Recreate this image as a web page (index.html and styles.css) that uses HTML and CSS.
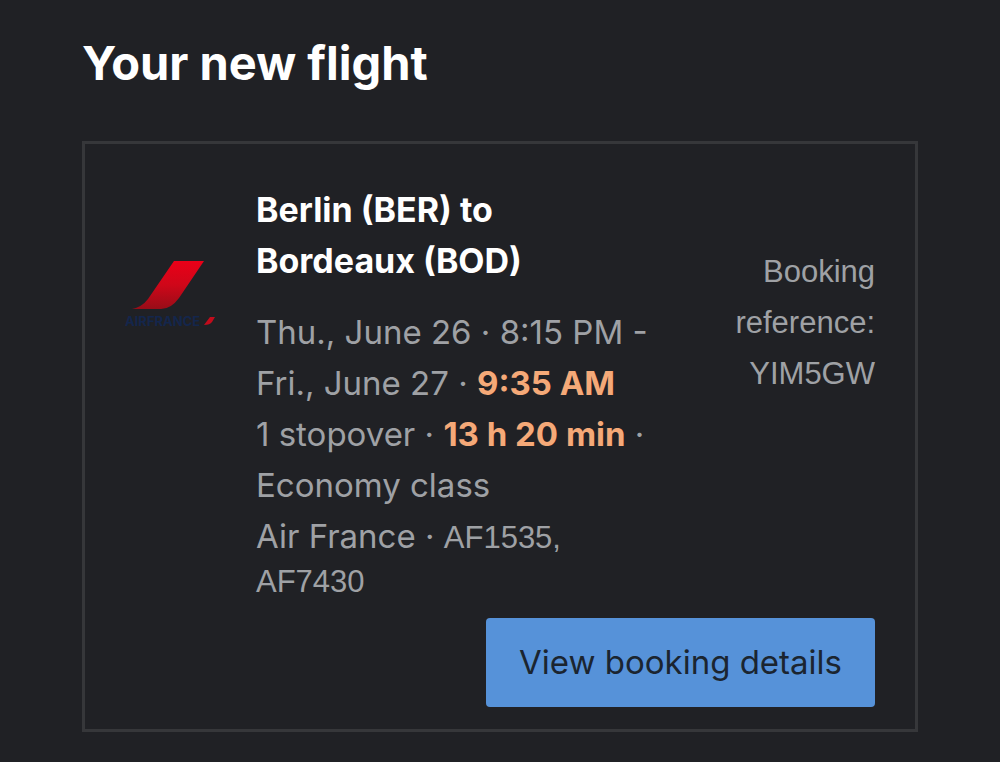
FILE: index.html
```html
<!DOCTYPE html>
<html lang="en">
<head>
    <meta charset="UTF-8">
    <meta name="viewport" content="width=device-width, initial-scale=1.0">
    <title>Your new flight</title>
    <link rel="stylesheet" href="styles.css">
</head>
<body>
    <main class="page">
        <h1 class="page-title">Your new flight</h1>

        <section class="flight-card">
            <div class="flight-row">
                <!-- Airline logo -->
                <svg class="airline-logo" viewBox="0 0 92 68" role="img" aria-label="Air France">
                    <defs>
                        <linearGradient id="tail" x1="0" y1="0" x2="0" y2="1">
                            <stop offset="0" stop-color="#ea0018"/>
                            <stop offset="0.5" stop-color="#cf0719"/>
                            <stop offset="1" stop-color="#980d18"/>
                        </linearGradient>
                    </defs>
                    <path fill="url(#tail)" d="M49 1H79L54 38Q46 49 36 49H7Q17 47 23 39Z"/>
                    <text class="logo-name" x="0" y="66">AIRFRANCE</text>
                    <path fill="#c20c1c" d="M85 57H90L87 62Q85 65 79 65Z"/>
                </svg>

                <div class="flight-info">
                    <h2 class="route">Berlin (BER) to<br>Bordeaux (BOD)</h2>
                    <p class="details">
                        Thu., June 26 · 8:15 PM -<br>
                        Fri., June 27 · <strong>9:35 AM</strong><br>
                        1 stopover · <strong>13 h 20 min</strong> ·<br>
                        Economy class<br>
                        Air France · <span class="code">AF1535,</span>
                    </p>
                    <p class="code last-code">AF7430</p>
                </div>

                <p class="reference">Booking reference: YIM5GW</p>
            </div>

            <div class="actions">
                <button type="button" class="details-button">View booking details</button>
            </div>
        </section>
    </main>
</body>
</html>
```

FILE: styles.css
```css
* {
    margin: 0;
    padding: 0;
    box-sizing: border-box;
}

body {
    background: #202125;
    color: #9fa1a5;
    font-family: Inter, "Liberation Sans", sans-serif;
    font-size: 33px;
    line-height: 51px;
}

.page {
    padding: 31px 82px 30px;
}

.page-title {
    color: #fff;
    font-size: 47px;
    font-weight: 700;
    line-height: 64px;
    margin-bottom: 46px;
}

.flight-card {
    border: 3px solid #36373a;
    padding: 40px 40px 22px;
}

.flight-row {
    display: flex;
    justify-content: space-between;
}

.airline-logo {
    flex: none;
    width: 92px;
    height: 68px;
    margin: 76px 39px 0 0;
}

.logo-name {
    fill: #14264c;
    font-family: Inter, sans-serif;
    font-size: 13px;
    font-weight: 700;
}

.flight-info {
    flex: 1;
}

.route {
    color: #fff;
    font-size: 34px;
    font-weight: 700;
    margin-bottom: 21px;
}

.details {
    white-space: nowrap;
}

.details strong {
    color: #f5a978;
    font-weight: 700;
}

.code,
.reference {
    font-family: "Liberation Sans", sans-serif;
    font-size: 31px;
}

.last-code {
    line-height: 38px;
}

.reference {
    width: 142px;
    margin-top: 62px;
    text-align: right;
}

.actions {
    display: flex;
    justify-content: flex-end;
    margin-top: 17px;
}

.details-button {
    padding: 19px 33px;
    border: none;
    border-radius: 4px;
    background: #5692d9;
    color: #1b2530;
    font-family: inherit;
    font-size: 33px;
    line-height: 51px;
    cursor: pointer;
}
```
